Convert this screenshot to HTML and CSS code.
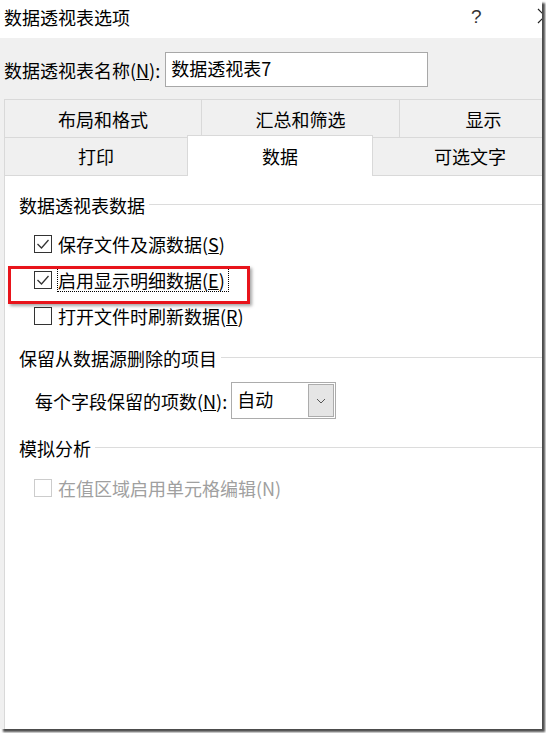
FILE: index.html
```html
<!DOCTYPE html>
<html lang="zh-CN">
<head>
<meta charset="utf-8">
<title>数据透视表选项</title>
<link rel="stylesheet" href="styles.css">
</head>
<body>
<div class="window">
  <div class="titlebar">
    <span class="title">数据透视表选项</span>
    <span class="help">?</span>
    <svg class="close" width="16" height="16" viewBox="0 0 16 16"><path d="M1 1 L15 15 M15 1 L1 15" stroke="#222" stroke-width="1.2" fill="none"/></svg>
  </div>
  <div class="name-row">
    <span class="label">数据透视表名称(<u>N</u>):</span>
    <div class="textbox">数据透视表7</div>
  </div>
  <div class="tabs">
    <div class="tab-row">
      <div class="tab t1">布局和格式</div>
      <div class="tab t2">汇总和筛选</div>
      <div class="tab t3">显示</div>
    </div>
    <div class="tab-row lower">
      <div class="tab t4">打印</div>
      <div class="tab t5 active">数据</div>
      <div class="tab t6">可选文字</div>
    </div>
  </div>
  <div class="panel">
    <div class="group g1"><span>数据透视表数据</span><i class="rule"></i></div>
    <div class="check first">
      <span class="box"><svg width="16" height="16" viewBox="0 0 16 16"><path d="M2.5 8 L6.5 12 L13.5 4" stroke="#333" stroke-width="1.3" fill="none"/></svg></span>
      <span class="ctext">保存文件及源数据(<u>S</u>)</span>
    </div>
    <div class="check">
      <span class="box"><svg width="16" height="16" viewBox="0 0 16 16"><path d="M2.5 8 L6.5 12 L13.5 4" stroke="#333" stroke-width="1.3" fill="none"/></svg></span>
      <span class="ctext focus">启用显示明细数据(<u>E</u>)</span>
    </div>
    <div class="check">
      <span class="box"></span>
      <span class="ctext">打开文件时刷新数据(<u>R</u>)</span>
    </div>
    <div class="group g2"><span>保留从数据源删除的项目</span><i class="rule"></i></div>
    <div class="combo-row">
      <span class="label">每个字段保留的项数(<u>N</u>):</span>
      <div class="combo">
        <span class="cval">自动</span>
        <span class="cbtn"><svg width="10" height="6" viewBox="0 0 10 6"><path d="M1 1 L5 5 L9 1" stroke="#555" stroke-width="1" fill="none"/></svg></span>
      </div>
    </div>
    <div class="group g3"><span>模拟分析</span><i class="rule"></i></div>
    <div class="check disabled">
      <span class="box"></span>
      <span class="ctext">在值区域启用单元格编辑(N)</span>
    </div>
  </div>
  <div class="highlight"></div>
</div>
</body>
</html>
```
FILE: styles.css
```css
html, body {
  margin: 0;
  padding: 0;
  background: #ffffff;
}
body {
  width: 546px;
  height: 733px;
  overflow: hidden;
  font-family: "Noto Sans CJK SC", "Microsoft YaHei", sans-serif;
  font-size: 18px;
  color: #000;
}
.window {
  position: relative;
  width: 542px;
  height: 729px;
  background: #f0f0f0;
  overflow: hidden;
  box-shadow: 3px 3px 2px rgba(0,0,0,0.7);
  display: flex;
  flex-direction: column;
}
.titlebar {
  height: 38px;
  background: #fff;
  display: flex;
  align-items: center;
  flex-shrink: 0;
}
.titlebar > * { flex-shrink: 0; }
.title {
  margin-left: 4px;
  line-height: 24px;
  margin-top: -4px;
  white-space: nowrap;
  width: 130px;
}
.help {
  margin-left: 337px;
  font-family: "Liberation Sans", sans-serif;
  font-size: 19px;
  color: #333;
  margin-top: -4px;
  width: 12px;
}
.close {
  margin-left: 54px;
  margin-top: -6px;
}
.name-row {
  display: flex;
  align-items: center;
  height: 37px;
  margin-top: 13px;
  padding-left: 4px;
  flex-shrink: 0;
}
.label {
  line-height: 24px;
  white-space: nowrap;
}
.textbox {
  margin-left: 5px;
  height: 35px;
  border: 1px solid #a8a8a8;
  background: #fff;
  box-sizing: border-box;
  width: 263px;
  line-height: 30px;
  padding-left: 5px;
}
.tabs {
  margin-top: 11px;
  margin-left: 4px;
  display: flex;
  flex-direction: column;
  flex-shrink: 0;
}
.tab-row {
  display: flex;
  height: 38px;
}
.tab {
  box-sizing: border-box;
  border: 1px solid #d9d9d9;
  border-right: none;
  border-bottom: none;
  display: flex;
  align-items: center;
  justify-content: center;
  line-height: 24px;
  flex-shrink: 0;
}
.lower .tab { padding-bottom: 2px; }
.t1 { width: 197px; }
.t2 { width: 198px; }
.t3 { width: 168px; }
.t4 { width: 183px; }
.t5 { width: 186px; }
.t6 { width: 194px; border-left: none; }
.lower .tab.active {
  background: #fff;
  height: 41px;
  margin-top: -2px;
  border-right: 1px solid #d9d9d9;
  position: relative;
  z-index: 2;
  padding-bottom: 0;
}
.panel {
  flex: 1;
  margin-left: 4px;
  background: #fff;
  border-top: 1px solid #d9d9d9;
  border-left: 1px solid #d9d9d9;
  display: flex;
  flex-direction: column;
  padding-left: 14px;
}
.group {
  display: flex;
  align-items: center;
  height: 24px;
  line-height: 24px;
  white-space: nowrap;
}
.group .rule {
  flex: 1;
  height: 1px;
  background: #dcdcdc;
  margin-left: 4px;
  margin-top: -2px;
}
.g1 { margin-top: 17px; }
.g2 { margin-top: 12px; }
.g3 { margin-top: 17px; }
.check {
  display: flex;
  align-items: center;
  height: 36px;
  padding-left: 15px;
}
.check.first { margin-top: 9px; }
.box {
  width: 18px;
  height: 18px;
  border: 1px solid #333;
  box-sizing: border-box;
  display: flex;
  align-items: center;
  justify-content: center;
  background: #fff;
}
.box svg { display: block; }
.ctext {
  margin-left: 6px;
  line-height: 22px;
}
.ctext.focus {
  outline: 1px dotted #000;
  outline-offset: 0;
  padding-right: 3px;
}
.disabled { margin-top: 10px; }
.disabled .box { border-color: #cccccc; }
.disabled .ctext { color: #a0a0a0; }
.combo-row {
  display: flex;
  align-items: center;
  margin-top: 12px;
  padding-left: 16px;
}
.combo {
  margin-left: 4px;
  width: 105px;
  height: 37px;
  box-sizing: border-box;
  border: 1px solid #acacac;
  background: #fff;
  display: flex;
  align-items: center;
  padding-left: 5px;
  padding-right: 1px;
}
.cval {
  flex: 1;
  line-height: 24px;
  margin-top: -4px;
}
.cbtn {
  width: 26px;
  height: 33px;
  box-sizing: border-box;
  border: 1px solid #acacac;
  background: #e5e5e5;
  display: flex;
  align-items: center;
  justify-content: center;
}
.highlight {
  position: absolute;
  left: 8px;
  top: 266px;
  width: 242px;
  height: 38px;
  box-sizing: border-box;
  border: 3px solid #e8141b;
  box-shadow: 2px 2px 3px rgba(0,0,0,0.35);
}
```
